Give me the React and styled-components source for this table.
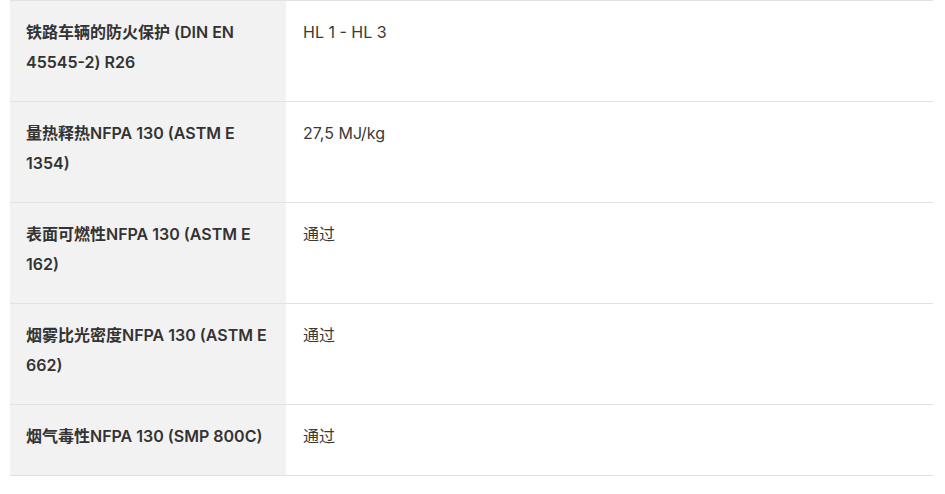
import React from "react";
import styled, { createGlobalStyle } from "styled-components";

const Global = createGlobalStyle`
  html, body { margin: 0; padding: 0; background: #fff; }
  body { font-family: Inter, "Noto Sans CJK SC", sans-serif; }
`;

const Wrap = styled.div`
  padding: 0 12px 0 10px;
`;

const Table = styled.div`
  display: grid;
  grid-template-columns: 276px 1fr;
  border-bottom: 1px solid #e2e2e6;
`;

const Cell = styled.div`
  border-top: 1px solid #e2e2e6;
  padding: 16px 16px 24px 16px;
  font-size: 16px;
  line-height: 30px;
  background: ${(p) => (p.$head ? "#f2f2f2" : "#fff")};
  color: ${(p) => (p.$head ? "#333" : "#3a3a3a")};
  font-weight: ${(p) => (p.$head ? 600 : 400)};
  font-family: Inter, "Noto Sans CJK SC", sans-serif;
  padding-left: ${(p) => (p.$head ? "16px" : "17px")};
`;

const rows = [
  ["铁路车辆的防火保护 (DIN EN 45545-2) R26", "HL 1 - HL 3"],
  ["量热释热NFPA 130 (ASTM E 1354)", "27,5 MJ/kg"],
  ["表面可燃性NFPA 130 (ASTM E 162)", "通过"],
  ["烟雾比光密度NFPA 130 (ASTM E 662)", "通过"],
  ["烟气毒性NFPA 130 (SMP 800C)", "通过"],
];

export default function App() {
  return (
    <>
      <Global />
      <Wrap>
        <Table>
          {rows.map(([k, v]) => (
            <React.Fragment key={k}>
              <Cell $head>{k}</Cell>
              <Cell>{v}</Cell>
            </React.Fragment>
          ))}
        </Table>
      </Wrap>
    </>
  );
}
